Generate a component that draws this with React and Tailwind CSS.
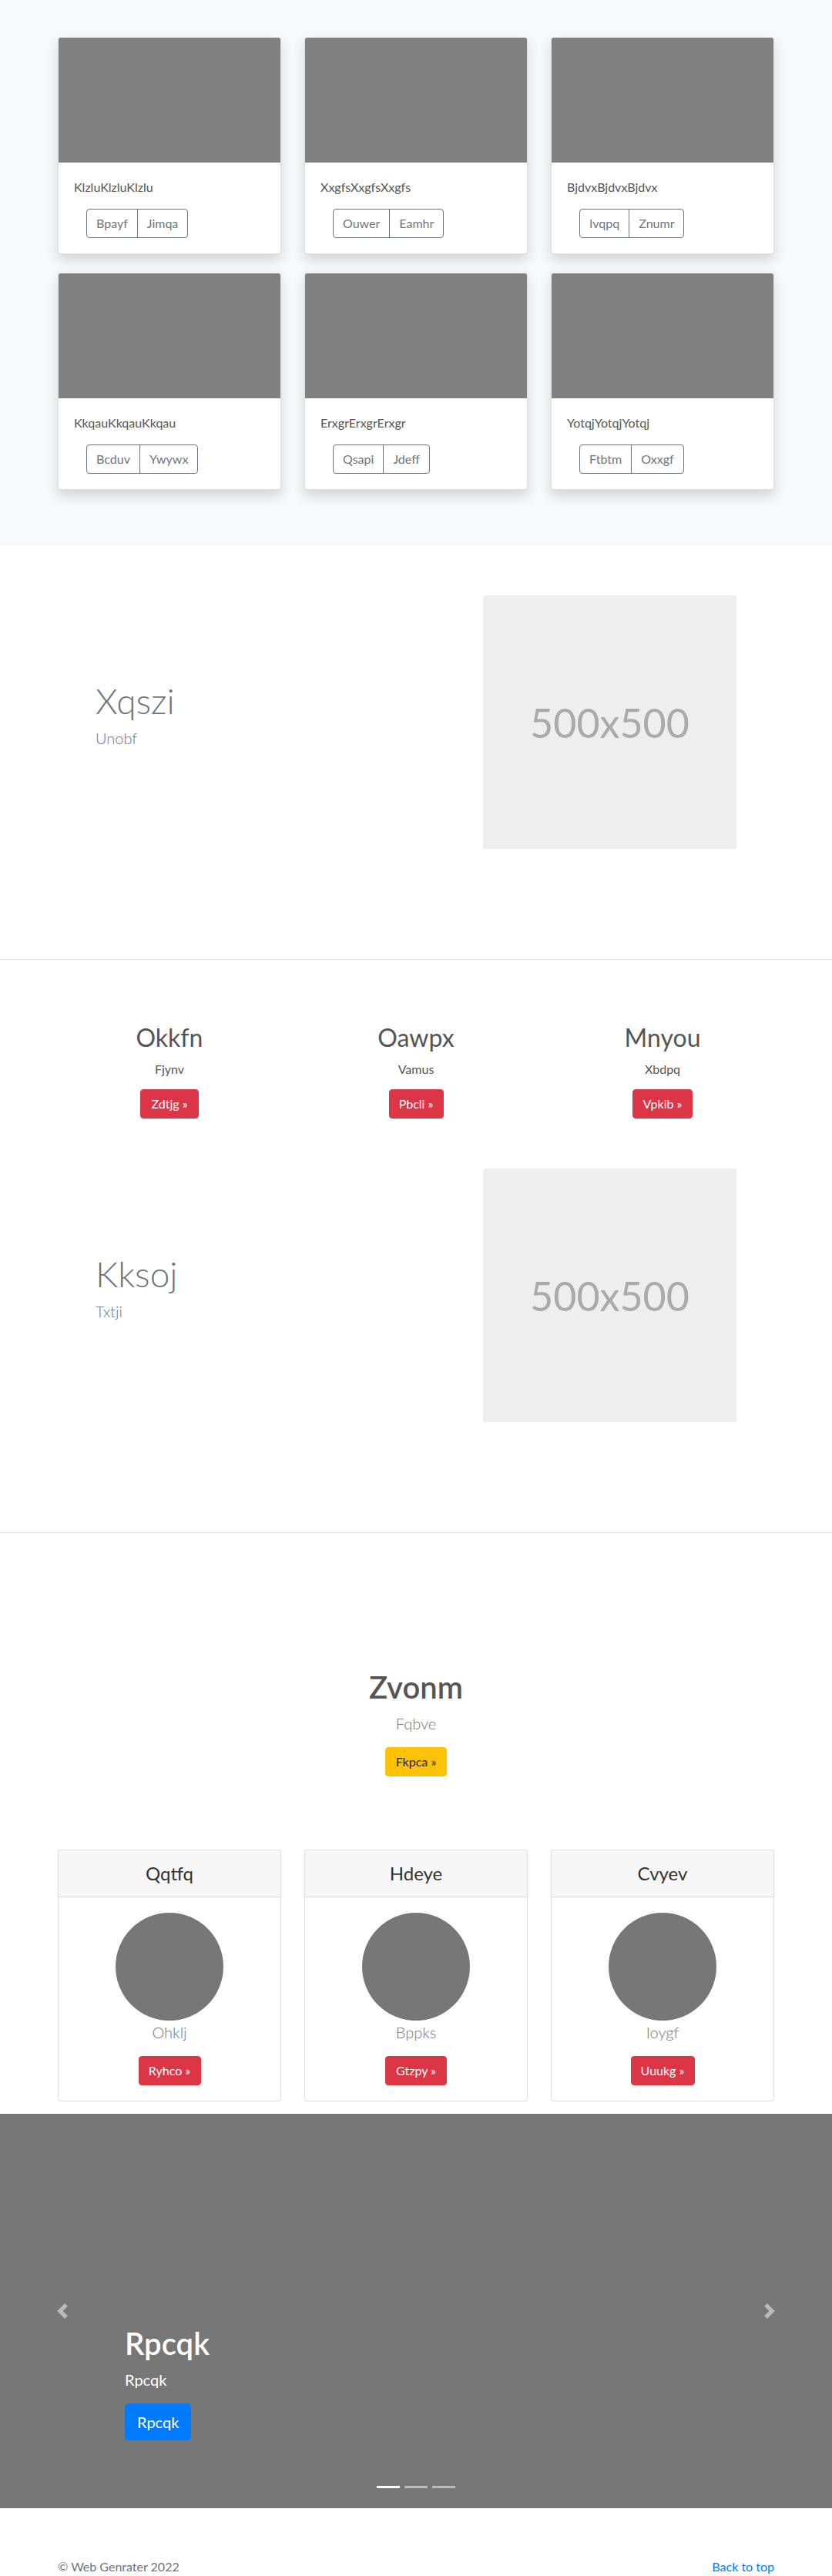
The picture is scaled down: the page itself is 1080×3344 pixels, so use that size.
import React from 'react';

const albums = [
  { title: 'KlzluKlzluKlzlu', a: 'Bpayf', b: 'Jimqa' },
  { title: 'XxgfsXxgfsXxgfs', a: 'Ouwer', b: 'Eamhr' },
  { title: 'BjdvxBjdvxBjdvx', a: 'Ivqpq', b: 'Znumr' },
  { title: 'KkqauKkqauKkqau', a: 'Bcduv', b: 'Ywywx' },
  { title: 'ErxgrErxgrErxgr', a: 'Qsapi', b: 'Jdeff' },
  { title: 'YotqjYotqjYotqj', a: 'Ftbtm', b: 'Oxxgf' },
];

const features = [
  { title: 'Okkfn', sub: 'Fjynv', btn: 'Zdtjg »', w: 'w-[76px]' },
  { title: 'Oawpx', sub: 'Vamus', btn: 'Pbcli »', w: 'w-[71px]' },
  { title: 'Mnyou', sub: 'Xbdpq', btn: 'Vpkib »', w: 'w-[78px]' },
];

const pricing = [
  { title: 'Qqtfq', sub: 'Ohklj', btn: 'Ryhco »', w: 'w-[81px]' },
  { title: 'Hdeye', sub: 'Bppks', btn: 'Gtzpy »', w: 'w-[80px]' },
  { title: 'Cvyev', sub: 'Ioygf', btn: 'Uuukg »', w: 'w-[83px]' },
];

function AlbumCard({ title, a, b }) {
  return (
    <div className="overflow-hidden rounded-[4px] border border-[rgba(0,0,0,0.125)] bg-white shadow-[0_8px_16px_rgba(0,0,0,0.15)]">
      <div className="h-[162px] bg-[#808080]" />
      <div className="p-5">
        <p className="mb-4 text-[16px] leading-[24px] text-[#555]">{title}</p>
        <div className="ml-4 inline-flex rounded-[4px] border border-[#6c757d] text-[16px] leading-[24px] text-[#6c757d]">
          <button className="px-3 py-[6px]">{a}</button>
          <button className="border-l border-[#6c757d] px-3 py-[6px]">{b}</button>
        </div>
      </div>
    </div>
  );
}

function Hero({ title, sub }) {
  return (
    <section className="border-b border-[#e5e5e5] pt-[65px] pb-[143px]">
      <div className="mx-auto flex w-[930px] items-center px-[49px]">
        <div className="flex-1">
          <h1 className="mb-[6px] text-[46px] font-light leading-[1.2] text-[#6c757d]">{title}</h1>
          <p className="mb-5 text-[20px] font-light leading-[30px] text-[#6c757d]">{sub}</p>
        </div>
        <div className="flex h-[329px] w-[329px] items-center justify-center bg-[#eeeeee]">
          <span className="text-[52px] leading-none text-[#aaaaaa]">500x500</span>
        </div>
      </div>
    </section>
  );
}

function RedButton({ children, w }) {
  return (
    <button className={`${w} inline-flex justify-center rounded-[4px] border border-[#dc3545] bg-[#dc3545] py-[6px] text-[16px] leading-[24px] text-white`}>
      {children}
    </button>
  );
}

export default function App() {
  return (
    <div className="bg-white font-['Lato','Open_Sans',sans-serif] text-[#212529]">
      <section className="bg-[#f8f9fa] pt-12 pb-[72px]">
        <div className="mx-auto grid w-[930px] grid-cols-3 gap-x-[30px] gap-y-6">
          {albums.map((c) => (
            <AlbumCard key={c.title} {...c} />
          ))}
        </div>
      </section>

      <Hero title="Xqszi" sub="Unobf" />

      <section>
        <div className="mx-auto grid w-[960px] grid-cols-3 pt-[82px] text-center">
          {features.map((f) => (
            <div key={f.title} className="px-[15px]">
              <h2 className="mb-[10px] text-[32px] leading-[1.2] text-[#555]">{f.title}</h2>
              <p className="mb-[14px] text-[16px] leading-[24px] text-[#555]">{f.sub}</p>
              <RedButton w={f.w}>{f.btn}</RedButton>
            </div>
          ))}
        </div>
        <Hero title="Kksoj" sub="Txtji" />
      </section>

      <section className="pt-[176px]">
        <div className="text-center">
          <h1 className="mb-2 text-[40px] font-semibold leading-[1.2] text-[#555]">Zvonm</h1>
          <p className="mb-4 text-[20px] font-light leading-[30px] text-[#6c757d]">Fqbve</p>
          <button className="inline-flex w-[80px] justify-center rounded-[4px] border border-[#ffc107] bg-[#ffc107] py-[6px] text-[16px] leading-[24px] text-[#212529]">
            Fkpca »
          </button>
        </div>
        <div className="mx-auto mt-[95px] grid w-[930px] grid-cols-3 gap-x-[30px]">
          {pricing.map((p) => (
            <div key={p.title} className="mb-4 rounded-[4px] border border-[rgba(0,0,0,0.125)] bg-white text-center">
              <div className="border-b border-[rgba(0,0,0,0.125)] bg-[rgba(0,0,0,0.03)] px-5 py-3">
                <h4 className="text-[24px] leading-[36px] text-[#333]">{p.title}</h4>
              </div>
              <div className="flex flex-col items-center p-5">
                <div className="h-[140px] w-[140px] rounded-full bg-[#777777]" />
                <p className="mb-4 text-[20px] font-light leading-[30px] text-[#6c757d]">{p.sub}</p>
                <RedButton w={p.w}>{p.btn}</RedButton>
              </div>
            </div>
          ))}
        </div>
      </section>

      <section className="relative flex h-[512px] flex-col justify-end bg-[#777777] pb-[88px] pl-[162px]">
        <div className="absolute inset-y-0 left-0 flex w-[15%] items-center justify-center opacity-50">
          <svg width="20" height="20" viewBox="0 0 8 8" fill="#fff">
            <path d="M5.25 0l-4 4 4 4 1.5-1.5L4.25 4l2.5-2.5L5.25 0z" />
          </svg>
        </div>
        <div className="absolute inset-y-0 right-0 flex w-[15%] items-center justify-center opacity-50">
          <svg width="20" height="20" viewBox="0 0 8 8" fill="#fff">
            <path d="M2.75 0l-1.5 1.5L3.75 4l-2.5 2.5L2.75 8l4-4-4-4z" />
          </svg>
        </div>
        <h1 className="mb-2 text-[40px] font-semibold leading-[1.2] text-white">Rpcqk</h1>
        <p className="mb-4 text-[20px] leading-[30px] text-white">Rpcqk</p>
        <div>
          <button className="rounded-[5px] bg-[#007bff] px-4 py-[9px] text-[20px] leading-[30px] text-white">Rpcqk</button>
        </div>
        <div className="absolute bottom-[26px] left-0 right-0 flex justify-center gap-[6px]">
          <span className="h-[3px] w-[30px] bg-white" />
          <span className="h-[3px] w-[30px] bg-[rgba(255,255,255,0.5)]" />
          <span className="h-[3px] w-[30px] bg-[rgba(255,255,255,0.5)]" />
        </div>
      </section>

      <footer className="pt-[64px]">
        <div className="mx-auto flex w-[930px] justify-between text-[16px] leading-[24px]">
          <p className="text-[#6c757d]">© Web Genrater 2022</p>
          <a href="#" className="text-[#007bff]">Back to top</a>
        </div>
      </footer>
    </div>
  );
}
